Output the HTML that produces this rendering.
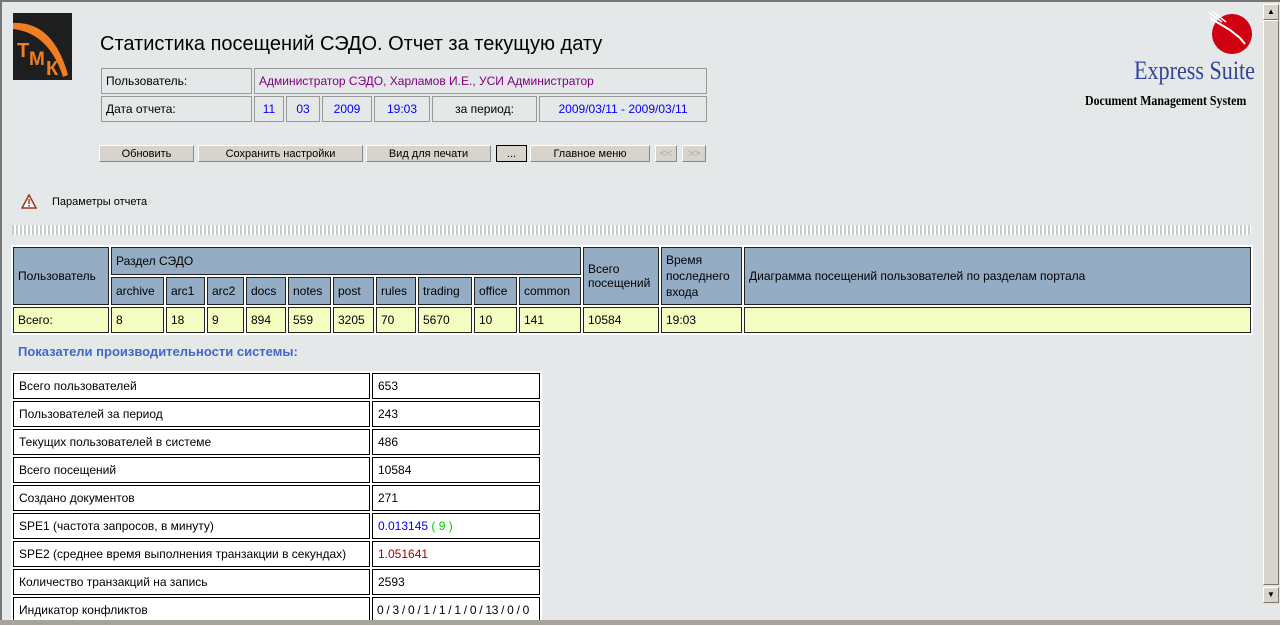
<!DOCTYPE html>
<html><head><meta charset="utf-8"><style>
body{margin:0;width:1280px;height:625px;overflow:hidden;background:#e4e8e8;font-family:"Liberation Sans",Arial,sans-serif;font-size:12px;color:#000;position:relative}
.a{position:absolute}
table{border-collapse:separate;table-layout:fixed}
td{box-sizing:border-box;overflow:hidden}
.info{left:99px;top:66px;border-spacing:2px;width:610px}
.info td{border:1px solid #999;height:26px;padding:0 4px;white-space:nowrap}
.b{position:absolute;top:145px;height:17px;background:#d8d4cc;border:1px solid #fff;border-right-color:#888;border-bottom-color:#888;font-size:11px;text-align:center;line-height:17px;box-sizing:border-box}
.main{left:11px;top:245px;border-spacing:2px;background:#fff;width:1242px}
.main td{border:1px solid #222;padding:0 4px;white-space:nowrap}
.main .h{background:#94adc4}
.main .d td{background:#f2ffc0;height:26px}
.perf{left:11px;top:371px;border-spacing:2px;background:#fff;width:531px}
.perf td{border:1px solid #000;height:26px;padding:0 5px;white-space:nowrap;background:#fff}
</style></head><body>
<div class="a" style="left:0;top:0;width:2px;height:625px;background:#777"></div>
<div class="a" style="left:0;top:0;width:1280px;height:2px;background:#777"></div>
<div class="a" style="left:13px;top:13px;width:59px;height:67px;background:#1e1e1e;overflow:hidden">
<svg width="59" height="67"><path d="M0 10 Q40 8 55 62 L50 64 Q36 20 0 16Z" fill="#f07f22"/>
<text x="4" y="44" font-family="Liberation Sans" font-weight="bold" font-size="20" fill="#f07f22">Т</text>
<text x="16" y="52" font-family="Liberation Sans" font-weight="bold" font-size="19" fill="#f07f22">М</text>
<text x="33" y="62" font-family="Liberation Sans" font-weight="bold" font-size="20" fill="#f07f22">К</text></svg></div>
<div class="a" style="left:100px;top:33px;font-size:20px">Статистика посещений СЭДО. Отчет за текущую дату</div>
<table class="a info"><colgroup><col style="width:151px"><col style="width:30px"><col style="width:34px"><col style="width:50px"><col style="width:56px"><col style="width:105px"><col></colgroup>
<tr><td>Пользователь:</td><td colspan="6" style="color:#800080">Администратор СЭДО, Харламов И.Е., УСИ Администратор</td></tr>
<tr><td>Дата отчета:</td><td style="color:#00f;text-align:center;padding:0">11</td><td style="color:#00f;text-align:center;padding:0">03</td><td style="color:#00f;text-align:center">2009</td><td style="color:#00f;text-align:center">19:03</td><td style="text-align:center">за период:</td><td style="color:#00f;text-align:center">2009/03/11 - 2009/03/11</td></tr></table>
<div class="b" style="left:99px;width:95px">Обновить</div>
<div class="b" style="left:198px;width:165px">Сохранить настройки</div>
<div class="b" style="left:366px;width:125px">Вид для печати</div>
<div class="b" style="left:496px;width:31px;border:1px solid #000">...</div>
<div class="b" style="left:530px;width:120px">Главное меню</div>
<div class="b" style="left:655px;width:22px;color:#aaa">&lt;&lt;</div>
<div class="b" style="left:682px;width:24px;color:#aaa">&gt;&gt;</div>
<svg class="a" style="left:21px;top:194px" width="16" height="15"><path d="M8 1 L15 14 L1 14Z" fill="#fff" stroke="#a03020" stroke-width="1.5"/><rect x="7.3" y="5" width="1.5" height="5" fill="#a03020"/><rect x="7.3" y="11" width="1.5" height="1.5" fill="#a03020"/></svg>
<div class="a" style="left:52px;top:196px;font-size:11px">Параметры отчета</div>
<div class="a" style="left:12px;top:225px;width:1239px;height:10px;background:repeating-linear-gradient(90deg,#c8cccc 0 2px,#fff 2px 4px)"></div>
<table class="a main"><colgroup><col style="width:96px"><col style="width:53px"><col style="width:39px"><col style="width:37px"><col style="width:40px"><col style="width:43px"><col style="width:41px"><col style="width:40px"><col style="width:54px"><col style="width:43px"><col style="width:62px"><col style="width:76px"><col style="width:81px"><col></colgroup>
<tr><td rowspan="2" class="h">Пользователь</td><td colspan="10" class="h" style="height:28px">Раздел СЭДО</td><td rowspan="2" class="h">Всего<br>посещений</td><td rowspan="2" class="h" style="line-height:16px">Время<br>последнего<br>входа</td><td rowspan="2" class="h">Диаграмма посещений пользователей по разделам портала</td></tr>
<tr><td class="h" style="height:28px">archive</td><td class="h">arc1</td><td class="h">arc2</td><td class="h">docs</td><td class="h">notes</td><td class="h">post</td><td class="h">rules</td><td class="h">trading</td><td class="h">office</td><td class="h">common</td></tr>
<tr class="d"><td>Всего:</td><td>8</td><td>18</td><td>9</td><td>894</td><td>559</td><td>3205</td><td>70</td><td>5670</td><td>10</td><td>141</td><td>10584</td><td>19:03</td><td></td></tr>
</table>
<div class="a" style="left:18px;top:344px;font-size:13px;font-weight:bold;color:#4466cc">Показатели производительности системы:</div>
<table class="a perf"><colgroup><col style="width:357px"><col></colgroup>
<tr><td>Всего пользователей</td><td>653</td></tr>
<tr><td>Пользователей за период</td><td>243</td></tr>
<tr><td>Текущих пользователей в системе</td><td>486</td></tr>
<tr><td>Всего посещений</td><td>10584</td></tr>
<tr><td>Создано документов</td><td>271</td></tr>
<tr><td>SPE1 (частота запросов, в минуту)</td><td><span style="color:#00f">0.013145</span> <span style="color:#0c0">( 9 )</span></td></tr>
<tr><td>SPE2 (среднее время выполнения транзакции в секундах)</td><td style="color:#a00">1.051641</td></tr>
<tr><td>Количество транзакций на запись</td><td>2593</td></tr>
<tr><td>Индикатор конфликтов</td><td style="padding:0 4px;letter-spacing:-0.3px">0 / 3 / 0 / 1 / 1 / 1 / 0 / 13 / 0 / 0</td></tr>
</table>
<svg class="a" style="left:1200px;top:10px" width="56" height="50"><circle cx="32" cy="24" r="20" fill="#d00010"/><path d="M10 8 L30 20 L40 28 L45 34" stroke="#fff" stroke-width="2" fill="none"/><path d="M8 2 L22 12 M12 1 L26 12" stroke="#fff" stroke-width="1.5"/></svg>
<div class="a" style="left:1134px;top:56px;font-family:'Liberation Serif',serif;font-size:26px;color:#334499;transform:scaleX(0.85);transform-origin:left">Express Suite</div>
<div class="a" style="left:1085px;top:94px;font-family:'Liberation Serif',serif;font-size:14px;font-weight:bold;transform:scaleX(0.85);transform-origin:left;white-space:nowrap">Document Management System</div>
<div class="a" style="left:1262px;top:2px;width:18px;height:603px;background:#e8e4dc"></div>
<div class="a" style="left:1263px;top:4px;width:16px;height:16px;background:#d8d4cc;border:1px solid #fff;border-right-color:#777;border-bottom-color:#777;box-sizing:border-box;font-size:8px;text-align:center;line-height:14px">▲</div>
<div class="a" style="left:1263px;top:20px;width:16px;height:565px;background:#d8d4cc;border:1px solid #fff;border-right-color:#777;border-bottom-color:#777;box-sizing:border-box"></div>
<div class="a" style="left:1263px;top:587px;width:16px;height:16px;background:#d8d4cc;border:1px solid #fff;border-right-color:#777;border-bottom-color:#777;box-sizing:border-box;font-size:8px;text-align:center;line-height:14px">▼</div>
<div class="a" style="left:0;top:620px;width:1280px;height:5px;background:#a8a49c"></div>
</body></html>
